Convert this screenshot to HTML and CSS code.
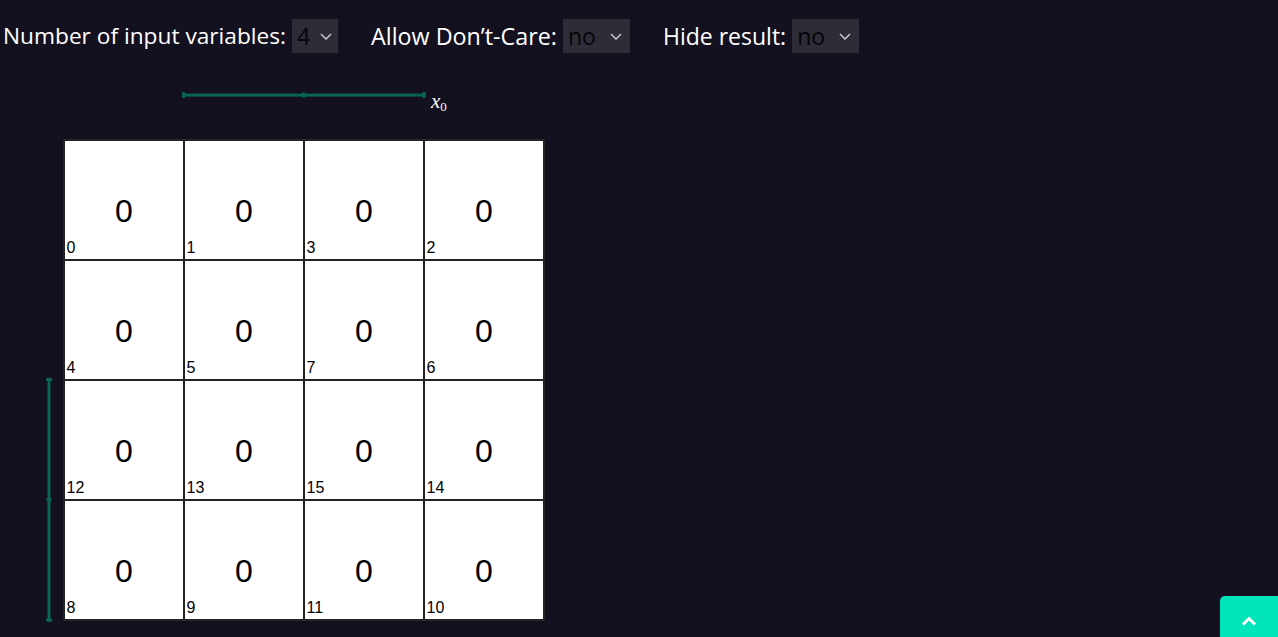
FILE: index.html
```html
<!DOCTYPE html>
<html lang="en">
<head>
<meta charset="utf-8">
<title>Karnaugh map</title>
<link rel="stylesheet" href="styles.css">
</head>
<body>
<div class="controls">
  <label class="ctl">
    <span class="ctl-label">Number of input variables:</span>
    <span class="sel sel-num">
      <select><option>4</option></select>
      <svg class="chev" width="12" height="7" viewBox="0 0 12 7"><path d="M1 1l5 5 5-5" fill="none" stroke="#c9c9cf" stroke-width="1.5"/></svg>
    </span>
  </label>
  <label class="ctl">
    <span class="ctl-label">Allow Don’t-Care:</span>
    <span class="sel sel-no">
      <select><option>no</option></select>
      <svg class="chev" width="12" height="7" viewBox="0 0 12 7"><path d="M1 1l5 5 5-5" fill="none" stroke="#c9c9cf" stroke-width="1.5"/></svg>
    </span>
  </label>
  <label class="ctl">
    <span class="ctl-label">Hide result:</span>
    <span class="sel sel-no">
      <select><option>no</option></select>
      <svg class="chev" width="12" height="7" viewBox="0 0 12 7"><path d="M1 1l5 5 5-5" fill="none" stroke="#c9c9cf" stroke-width="1.5"/></svg>
    </span>
  </label>
</div>

<div class="kmap">
  <div class="top-axis">
    <svg class="hbracket" width="244" height="6" viewBox="0 0 244 6">
      <rect x="0" y="1.6" width="244" height="3" fill="#0b6651"/>
      <rect x="0" y="0" width="3" height="6" fill="#0b6651"/>
      <rect x="120" y="0.5" width="3" height="5" fill="#0b6651"/>
      <rect x="240.5" y="0" width="3" height="6" fill="#0b6651"/>
    </svg>
    <span class="var">x<sub>0</sub></span>
  </div>
  <div class="map-body">
    <div class="left-axis">
      <svg class="vbracket" width="6" height="244" viewBox="0 0 6 244">
        <rect x="1.5" y="0" width="3" height="244" fill="#0b6651"/>
        <rect x="0" y="0" width="6" height="3" fill="#0b6651"/>
        <rect x="0.5" y="120" width="5" height="3" fill="#0b6651"/>
        <rect x="0" y="240.5" width="6" height="3" fill="#0b6651"/>
      </svg>
      <span class="var var-left">x<sub>3</sub></span>
    </div>
    <div class="grid">
      <div class="cell"><span class="val">0</span><span class="idx">0</span></div>
      <div class="cell"><span class="val">0</span><span class="idx">1</span></div>
      <div class="cell"><span class="val">0</span><span class="idx">3</span></div>
      <div class="cell"><span class="val">0</span><span class="idx">2</span></div>
      <div class="cell"><span class="val">0</span><span class="idx">4</span></div>
      <div class="cell"><span class="val">0</span><span class="idx">5</span></div>
      <div class="cell"><span class="val">0</span><span class="idx">7</span></div>
      <div class="cell"><span class="val">0</span><span class="idx">6</span></div>
      <div class="cell"><span class="val">0</span><span class="idx">12</span></div>
      <div class="cell"><span class="val">0</span><span class="idx">13</span></div>
      <div class="cell"><span class="val">0</span><span class="idx">15</span></div>
      <div class="cell"><span class="val">0</span><span class="idx">14</span></div>
      <div class="cell"><span class="val">0</span><span class="idx">8</span></div>
      <div class="cell"><span class="val">0</span><span class="idx">9</span></div>
      <div class="cell"><span class="val">0</span><span class="idx">11</span></div>
      <div class="cell"><span class="val">0</span><span class="idx">10</span></div>
    </div>
  </div>
</div>

<button class="to-top" aria-label="Back to top">
  <svg width="16" height="10" viewBox="0 0 16 10"><path d="M2 8.5l6-6 6 6" fill="none" stroke="#ffffff" stroke-width="3"/></svg>
</button>
</body>
</html>
```

FILE: styles.css
```css
html {
  background: #13111f;
}
body {
  margin: 0;
  padding: 0 0 40px 3px;
  background: #13111f;
  color: #ffffff;
  font-family: "Open Sans", "Noto Sans", sans-serif;
}

.controls {
  display: flex;
  align-items: center;
  gap: 33px;
  padding-top: 19px;
}
.ctl {
  display: flex;
  align-items: center;
  gap: 6px;
}
.ctl-label {
  font-size: 23px;
  line-height: 34px;
  color: #ffffff;
}
.ctl:first-child .ctl-label {
  font-size: 22.7px;
}
.ctl:nth-child(2) .ctl-label {
  font-size: 23.3px;
}
.sel {
  position: relative;
  display: inline-flex;
  height: 34px;
  background: #2e2c36;
}
.sel select {
  appearance: none;
  -webkit-appearance: none;
  border: 0;
  outline: none;
  margin: 0;
  background: transparent;
  color: #050507;
  font-family: "Open Sans", "Noto Sans", sans-serif;
  font-size: 23px;
  height: 34px;
  padding: 0 0 0 5px;
}
.sel-num select { width: 46px; }
.sel-no select { width: 67px; }
.chev {
  position: absolute;
  top: 14px;
  right: 7px;
  pointer-events: none;
}
.sel-num .chev { right: 6px; }
.sel-no .chev { right: 8px; }

.kmap {
  margin-top: 39px;
}
.top-axis {
  display: flex;
  align-items: flex-start;
  padding-left: 179px;
  height: 47px;
}
.hbracket {
  display: block;
}
.var {
  font-family: "Liberation Serif", "DejaVu Serif", serif;
  font-style: italic;
  font-size: 21px;
  line-height: 1;
  color: #ffffff;
  margin-left: 5px;
  margin-top: -1px;
}
.var sub {
  font-style: normal;
  font-size: 13px;
  vertical-align: -3px;
}

.map-body {
  display: flex;
  align-items: flex-start;
}
.left-axis {
  width: 60px;
  display: flex;
  flex-direction: column;
  align-items: flex-start;
  padding-top: 239px;
  padding-left: 43px;
  box-sizing: border-box;
}
.vbracket {
  display: block;
}
.var-left {
  margin: 9px 0 0 -5px;
}

.grid {
  display: grid;
  grid-template-columns: repeat(4, 118px);
  grid-auto-rows: 118px;
  gap: 2px;
  padding: 2px;
  background: #232323;
}
.cell {
  background: #ffffff;
  color: #000000;
  display: flex;
  flex-direction: column;
  justify-content: flex-end;
  font-family: "Liberation Sans", Arial, sans-serif;
  padding: 0 0 2px 1.5px;
}
.val {
  font-size: 32px;
  line-height: 32px;
  text-align: center;
  margin-bottom: 12px;
  padding-right: 1.5px;
}
.idx {
  font-size: 16px;
  line-height: 18px;
}

.to-top {
  position: fixed;
  right: 0;
  bottom: -10px;
  width: 58px;
  height: 51px;
  border: 0;
  border-radius: 5px 0 0 0;
  background: #00e6b8;
  padding: 0 0 10px 0;
  display: flex;
  align-items: center;
  justify-content: center;
  cursor: pointer;
}
.to-top svg {
  display: block;
  margin-top: 8px;
}
```
